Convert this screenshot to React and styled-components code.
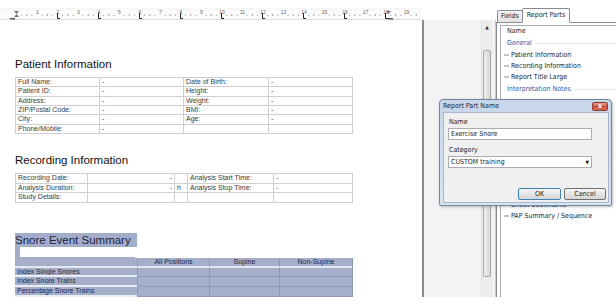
import React from "react";
import styled, { createGlobalStyle } from "styled-components";

const UI = `"DejaVu Sans Condensed", "DejaVu Sans", Tahoma, sans-serif`;
const DOC = `"Liberation Sans", Arial, sans-serif`;

const Global = createGlobalStyle`
  html, body { margin: 0; padding: 0; background: #ffffff; }
  body { width: 616px; height: 304px; overflow: hidden; }
`;

const Root = styled.div`
  position: relative;
  display: flex;
  width: 616px;
  height: 297px;
  overflow: hidden;
  background: #fff;
`;

/* ---------- document column ---------- */
const DocColumn = styled.div`
  width: 422px;
  display: flex;
  flex-direction: column;
`;

const RulerBar = styled.div`
  margin-top: 8px;
  height: 12px;
  line-height: 0;
`;

const DocPage = styled.div`
  padding-left: 15px;
  display: flex;
  flex-direction: column;
  align-items: flex-start;
  font-family: ${DOC};
`;

const Heading = styled.div`
  margin-top: ${(p) => p.$mt}px;
  font-size: 11.5px;
  line-height: 14px;
  height: 14px;
  color: #111;
  white-space: nowrap;
  ${(p) => (p.$selected ? `background: #a3adc9; color: #1b2340; padding-right: 6px;` : "")}
`;

const Grid = styled.div`
  margin-top: ${(p) => p.$mt}px;
  display: grid;
  grid-template-columns: ${(p) => p.$cols};
  grid-auto-rows: ${(p) => p.$rowH}px;
  border-top: 1px solid #cfcfcf;
  border-left: 1px solid #cfcfcf;
  box-sizing: border-box;
`;

const Cell = styled.div`
  border-right: 1px solid #cfcfcf;
  border-bottom: 1px solid #cfcfcf;
  font-size: 7px;
  line-height: 8px;
  padding: 0 2px;
  color: #3a3a3a;
  white-space: nowrap;
  overflow: hidden;
  text-align: ${(p) => p.$align || "left"};
  box-sizing: border-box;
`;

const SelStrip = styled.div`
  display: flex;
  width: 120px;
  height: 11px;
  background: #a3adc9;
  box-sizing: border-box;
  padding: 0 0 1px 5px;
`;

const SelHole = styled.div`
  flex: 1;
  background: #ffffff;
`;

const SumGrid = styled.div`
  display: grid;
  grid-template-columns: 122px 72px 70px 73px;
  grid-auto-rows: 9.75px;
  background: #a6afc9;
  border-right: 1px solid #8e98b6;
`;

const SumCell = styled.div`
  font-size: 7px;
  line-height: 8px;
  padding: 0 2px;
  color: #1f2746;
  white-space: nowrap;
  overflow: hidden;
  box-sizing: border-box;
  text-align: ${(p) => (p.$head ? "center" : "left")};
  border-left: ${(p) => (p.$first ? "none" : "1px solid #8e98b6")};
  border-bottom: ${(p) => (p.$head ? "2px solid #e4e8f1" : p.$first ? "2px solid #e9ecf3" : "1px solid #8e98b6")};
`;

/* ---------- side pane ---------- */
const SidePane = styled.div`
  width: 74px;
  padding-top: 20px;
  display: flex;
  box-sizing: border-box;
`;

const SplitPanel = styled.div`
  flex: 1;
  display: flex;
  justify-content: flex-end;
  background: #f3f3f3;
  border-left: 2px solid #8a8a8a;
  border-right: 1px solid #c9c9c9;
  padding-right: 3px;
`;

const ScrollTrack = styled.div`
  width: 10px;
  background: #ececec;
  border-left: 1px solid #e2e2e2;
  display: flex;
  flex-direction: column;
  align-items: center;
`;

const ScrollArrow = styled.div`
  height: 14px;
  font-size: 5px;
  line-height: 14px;
  color: #333;
  font-family: ${UI};
`;

const ScrollThumb = styled.div`
  margin-top: 16px;
  width: 8px;
  height: 227px;
  box-sizing: border-box;
  border: 1px solid #a9a9a9;
  border-radius: 2px;
  background: linear-gradient(to right, #eeeeee, #d8d8d8);
`;

/* ---------- report parts pane ---------- */
const PartsPane = styled.div`
  flex: 1;
  display: flex;
  flex-direction: column;
  font-family: ${UI};
  font-size: 7px;
  color: #1e1e1e;
  min-width: 0;
`;

const TabsRow = styled.div`
  height: 22px;
  display: flex;
  align-items: flex-end;
  padding-left: 1px;
  position: relative;
  z-index: 1;
`;

const Tab = styled.div`
  height: ${(p) => (p.$active ? 15 : 12)}px;
  padding: 0 ${(p) => (p.$active ? 4 : 3)}px;
  box-sizing: border-box;
  border: 1px solid #898c95;
  border-bottom: ${(p) => (p.$active ? "1px solid #ffffff" : "none")};
  margin-bottom: ${(p) => (p.$active ? -1 : 0)}px;
  margin-left: ${(p) => (p.$active ? -1 : 0)}px;
  background: ${(p) => (p.$active ? "#ffffff" : "linear-gradient(#f3f3f3, #e3e3e3)")};
  border-radius: 2px 2px 0 0;
  line-height: ${(p) => (p.$active ? 12 : 11)}px;
  white-space: nowrap;
`;

const TabBody = styled.div`
  flex: 1;
  border-top: 1px solid #898c95;
  border-left: 1px solid #898c95;
  background: #ffffff;
  padding: 2px 0 0 3px;
  display: flex;
  min-height: 0;
`;

const ListBox = styled.div`
  flex: 1;
  border-top: 1px solid #abadb3;
  border-left: 1px solid #abadb3;
  overflow: hidden;
  display: flex;
  flex-direction: column;
`;

const ListHeader = styled.div`
  height: 11px;
  line-height: 10px;
  padding-left: 6px;
  flex: none;
`;

const GroupHeader = styled.div`
  height: 12px;
  flex: none;
  display: flex;
  align-items: center;
  padding-left: 6px;
  margin-top: ${(p) => p.$mt || 0}px;
  margin-bottom: ${(p) => p.$mb || 0}px;
  color: #3658a8;
  white-space: nowrap;
  &::after {
    content: "";
    flex: 1;
    height: 1px;
    margin-left: 4px;
    background: #dfe4ec;
  }
`;

const ListGap = styled.div`
  flex: none;
  height: ${(p) => p.$h}px;
`;

const Item = styled.div`
  height: 11px;
  flex: none;
  display: flex;
  align-items: center;
  padding-left: 3px;
  gap: 2px;
  white-space: nowrap;
`;

const ItemIcon = styled.span`
  width: 5px;
  height: 2px;
  background: #c6c6c6;
  flex: none;
`;

/* ---------- dialog ---------- */
const Dialog = styled.div`
  position: absolute;
  left: 439px;
  top: 99px;
  width: 173px;
  height: 107px;
  box-sizing: border-box;
  border: 1px solid #73889f;
  border-radius: 4px 4px 2px 2px;
  background: linear-gradient(#c7d6e9, #d9e4f1);
  box-shadow: 1px 1px 3px rgba(0, 0, 0, 0.25);
  display: flex;
  flex-direction: column;
  font-family: ${UI};
  font-size: 7px;
  color: #1e1e1e;
  z-index: 5;
`;

const TitleBar = styled.div`
  height: 12px;
  display: flex;
  align-items: center;
  justify-content: space-between;
  padding: 0 3px 0 3px;
`;

const CloseBtn = styled.div`
  width: 16px;
  height: 9px;
  box-sizing: border-box;
  border: 1px solid #8b3a2e;
  border-radius: 2px;
  background: linear-gradient(#e7a08f, #c9503a 55%, #d8705a);
  color: #fff;
  font-size: 7px;
  line-height: 7px;
  text-align: center;
  font-weight: bold;
`;

const DialogBody = styled.div`
  flex: 1;
  margin: 0 2px 2px 3px;
  background: #f0f0f0;
  border: 1px solid #a9b8cc;
  padding: 4px 2px 0 4px;
  display: flex;
  flex-direction: column;
`;

const FieldLabel = styled.div`
  line-height: 10px;
  margin-top: ${(p) => p.$mt || 0}px;
  padding-left: 1px;
`;

const TextBox = styled.div`
  width: 144px;
  height: 12px;
  box-sizing: border-box;
  border: 1px solid #abadb3;
  background: #fff;
  margin-top: 1px;
  padding: 0 2px;
  line-height: 10px;
  display: flex;
  justify-content: space-between;
  align-items: center;
`;

const Arrow = styled.span`
  font-size: 5px;
  color: #111;
`;

const ButtonRow = styled.div`
  margin-top: 20px;
  display: flex;
  justify-content: flex-end;
  gap: 3px;
`;

const Button = styled.div`
  width: ${(p) => p.$w}px;
  height: 12px;
  box-sizing: border-box;
  border: 1px solid ${(p) => (p.$default ? "#3c7fb1" : "#707070")};
  border-radius: 2px;
  background: linear-gradient(#f6f6f6, #e4e4e4 50%, #d6d6d6);
  text-align: center;
  line-height: 10px;
`;

function Ruler() {
  const W = 422;
  const ticks = [];
  for (let q = 0; q < 82; q++) {
    const x = 16 + q * 5.125;
    if (x > 418) break;
    if (q % 4 === 0) continue;
    const half = q % 2 === 0;
    ticks.push(
      <rect key={"t" + q} x={x} y={half ? 6 : 7} width={1} height={half ? 2 : 1} fill="#9c9c9c" />
    );
  }
  const nums = [];
  for (let k = 1; k <= 19; k++) {
    const x = 16 + k * 20.5;
    nums.push(
      <text key={"n" + k} x={x + 1} y={6} fontSize="5" fill="#666" fontFamily={DOC} textAnchor="middle">
        {k}
      </text>
    );
  }
  const tabs = [];
  for (let k = 2; k <= 18; k += 2) {
    const x = Math.round(16 + k * 20.5);
    tabs.push(
      <path key={"l" + k} d={`M${x + 0.5} 5 V10.5 H${x + 3}`} stroke="#222" strokeWidth="1" fill="none" />
    );
  }
  return (
    <svg width={W} height={12} viewBox={`0 0 ${W} 12`}>
      <rect x="0" y="0" width={W} height="12" fill="#f7f7f7" />
      <rect x="0" y="11" width={W} height="1" fill="#dedede" />
      <rect x="0" y="2" width={W} height="8" fill="#fbfbfb" />
      {ticks}
      {nums}
      {tabs}
      <path d="M14 3 h5 l-2.5 3 z M14 9 h5 l-2.5 -3 z" fill="#777" />
      <rect x="10" y="10" width="5" height="1.5" fill="#555" />
      <path d="M386 3 h5 l-2.5 3 z" fill="#777" />
      <rect x="388" y="10" width="5" height="1.5" fill="#555" />
    </svg>
  );
}

const patientRows = [
  ["Full Name:", "-", "Date of Birth:", "-"],
  ["Patient ID:", "-", "Height:", "-"],
  ["Address:", "-", "Weight:", "-"],
  ["ZIP/Postal Code:", "-", "BMI:", "-"],
  ["City:", "-", "Age:", "-"],
  ["Phone/Mobile:", "-", "", ""],
];

const recRows = [
  ["Recording Date:", "-", "", "Analysis Start Time:", "-"],
  ["Analysis Duration:", "-", "h", "Analysis Stop Time:", "-"],
  ["Study Details:", "", "", "", ""],
];

const sumRows = ["Index Single Snores", "Index Snore Trains", "Percentage Snore Trains"];

export default function App() {
  return (
    <>
      <Global />
      <Root>
        <DocColumn>
          <RulerBar>
            <Ruler />
          </RulerBar>
          <DocPage>
            <Heading $mt={37}>Patient Information</Heading>
            <Grid $mt={6} $cols="84px 84px 85px 84px" $rowH={9.33}>
              {patientRows.flat().map((t, i) => (
                <Cell key={i}>{t}</Cell>
              ))}
            </Grid>
            <Heading $mt={19}>Recording Information</Heading>
            <Grid $mt={6} $cols="72px 87px 13px 86px 79px" $rowH={9.67}>
              {recRows.flat().map((t, i) => (
                <Cell key={i} $align={i % 5 === 1 ? "right" : "left"}>
                  {t}
                </Cell>
              ))}
            </Grid>
            <Heading $mt={30} $selected>
              Snore Event Summary
            </Heading>
            <SelStrip>
              <SelHole />
            </SelStrip>
            <SumGrid>
              <SumCell $head $first />
              <SumCell $head>All Positions</SumCell>
              <SumCell $head>Supine</SumCell>
              <SumCell $head>Non-Supine</SumCell>
              {sumRows.map((r) => (
                <React.Fragment key={r}>
                  <SumCell $first>{r}</SumCell>
                  <SumCell />
                  <SumCell />
                  <SumCell />
                </React.Fragment>
              ))}
            </SumGrid>
          </DocPage>
        </DocColumn>

        <SidePane>
          <SplitPanel>
            <ScrollTrack>
              <ScrollArrow>▲</ScrollArrow>
              <ScrollThumb />
            </ScrollTrack>
          </SplitPanel>
        </SidePane>

        <PartsPane>
          <TabsRow>
            <Tab>Fields</Tab>
            <Tab $active>Report Parts</Tab>
          </TabsRow>
          <TabBody>
            <ListBox>
              <ListHeader>Name</ListHeader>
              <GroupHeader>General</GroupHeader>
              <Item>
                <ItemIcon />
                Patient Information
              </Item>
              <Item>
                <ItemIcon />
                Recording Information
              </Item>
              <Item>
                <ItemIcon />
                Report Title Large
              </Item>
              <GroupHeader $mt={1} $mb={5.5}>
                Interpretation Notes
              </GroupHeader>
              <ListGap $h={99} />
              <Item>
                <ItemIcon />
                Sheet Bookmarks
              </Item>
              <Item>
                <ItemIcon />
                PAP Summary / Sequence
              </Item>
            </ListBox>
          </TabBody>
        </PartsPane>

        <Dialog>
          <TitleBar>
            <span>Report Part Name</span>
            <CloseBtn>x</CloseBtn>
          </TitleBar>
          <DialogBody>
            <FieldLabel>Name</FieldLabel>
            <TextBox>Exercise Snore</TextBox>
            <FieldLabel $mt={5}>Category</FieldLabel>
            <TextBox>
              <span>CUSTOM training</span>
              <Arrow>▼</Arrow>
            </TextBox>
            <ButtonRow>
              <Button $w={43} $default>
                OK
              </Button>
              <Button $w={42}>Cancel</Button>
            </ButtonRow>
          </DialogBody>
        </Dialog>
      </Root>
    </>
  );
}
